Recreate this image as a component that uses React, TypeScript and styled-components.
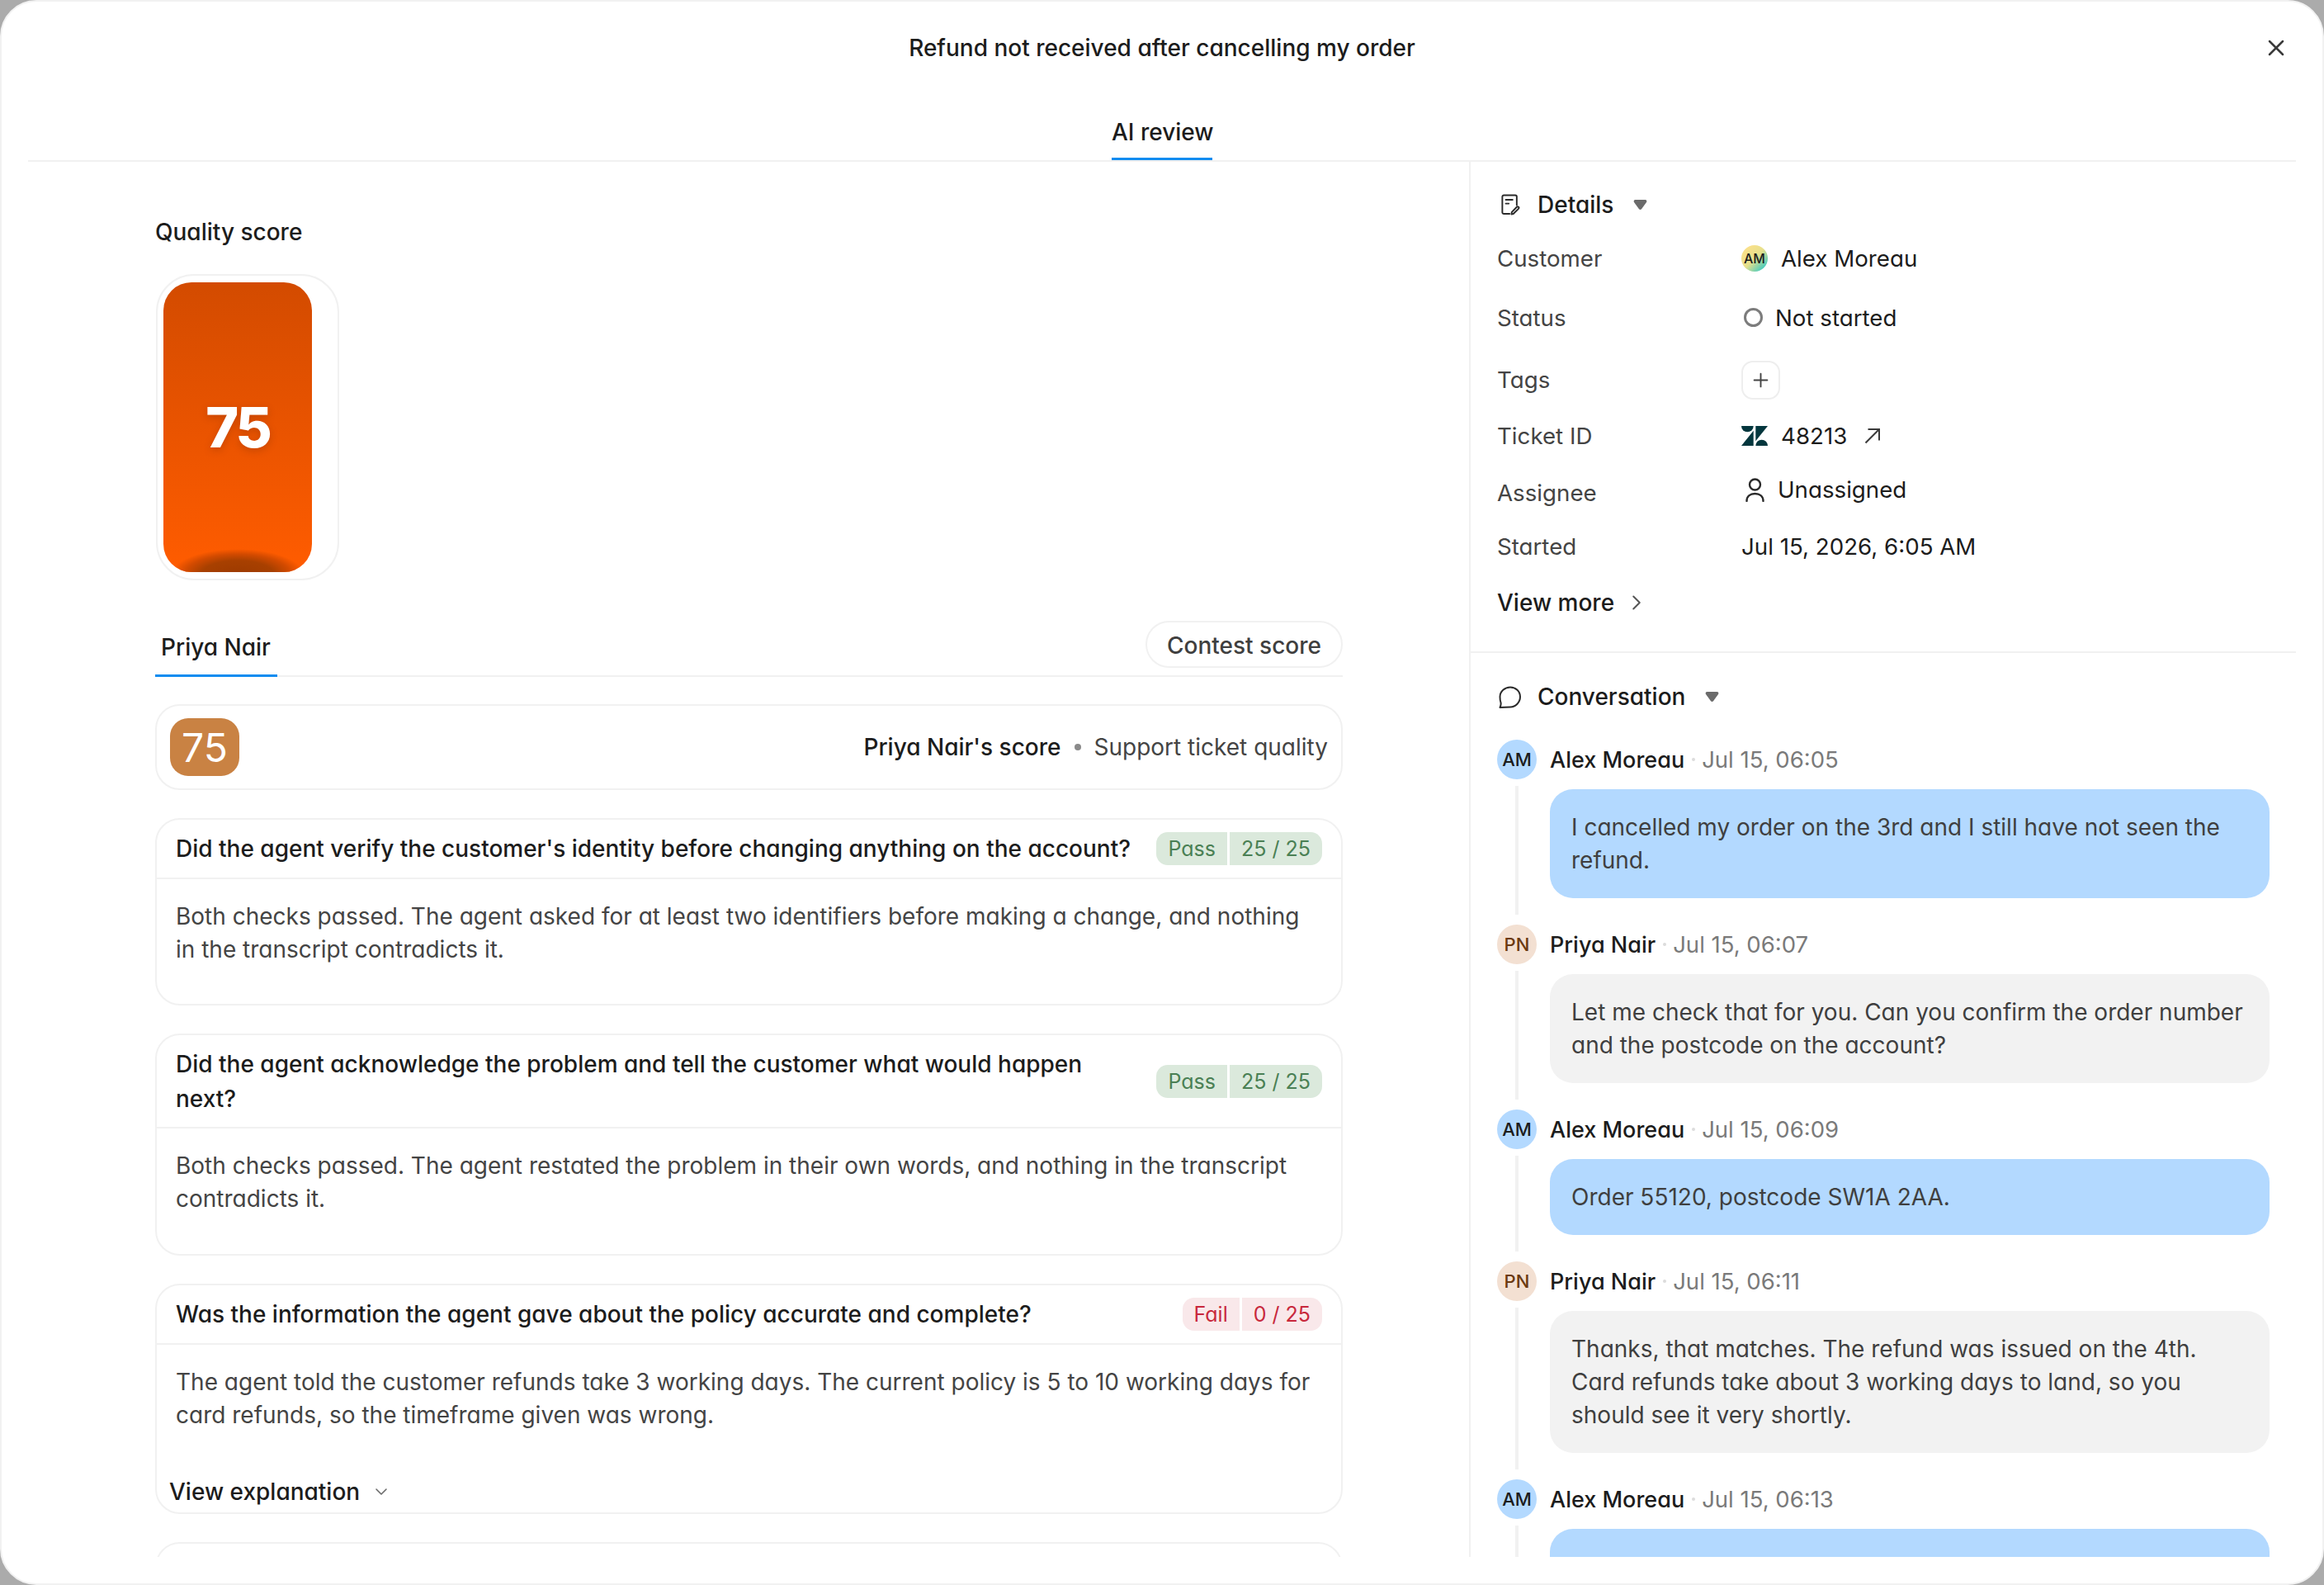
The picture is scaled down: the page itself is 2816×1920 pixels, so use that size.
import styled, { createGlobalStyle } from "styled-components";
import { ChevronDown, ChevronRight, Plus, X } from "lucide-react";

const GlobalStyle = createGlobalStyle`
  html, body {
    margin: 0;
    padding: 0;
    background: #ababab;
    font-family: "Inter", "Noto Sans", sans-serif;
    font-feature-settings: "cv11" 1;
    color: #1c1c1c;
  }
  * { box-sizing: border-box; }
`;

const Modal = styled.div`
  width: 2816px;
  height: 1920px;
  background: #fff;
  border: 2px solid #f1f1f1;
  border-radius: 44px;
  display: flex;
  flex-direction: column;
  overflow: hidden;
`;

const Header = styled.header`
  height: 194px;
  margin: 0 32px;
  border-bottom: 2px solid #f1f1f1;
  flex: none;
  position: relative;
  display: flex;
  flex-direction: column;
  align-items: center;
`;

const Title = styled.h1`
  margin: 0;
  padding-top: 36px;
  font-size: 28px;
  line-height: 40px;
  font-weight: 450;
`;

const CloseButton = styled.button`
  position: absolute;
  right: 7px;
  top: 39px;
  width: 34px;
  height: 34px;
  padding: 0;
  border: 0;
  background: none;
  color: #3a3a3a;
  display: flex;
  align-items: center;
  justify-content: center;
`;

const ReviewTab = styled.div`
  margin-top: 62px;
  height: 54px;
  width: 122px;
  text-align: center;
  white-space: nowrap;
  font-size: 28px;
  line-height: 40px;
  font-weight: 450;
  border-bottom: 3px solid #0f8cf0;
`;

const Body = styled.div`
  height: 1690px;
  margin: 0 32px;
  display: flex;
  overflow: hidden;
  flex: none;
`;

const LeftPane = styled.main`
  width: 1746px;
  flex: none;
  padding: 65px 153px 0 154px;
  overflow: hidden;
`;

const SectionLabel = styled.div`
  font-size: 28px;
  line-height: 40px;
  font-weight: 450;
`;

const ScoreTile = styled.div`
  margin: 31px 0 0 1px;
  width: 222px;
  height: 371px;
  border: 2px solid #f1f1f1;
  border-radius: 46px;
  padding: 8px 31px 8px 7px;
`;

const ScoreFill = styled.div`
  position: relative;
  height: 351px;
  border-radius: 34px;
  overflow: hidden;
  background: linear-gradient(180deg, #d34b00 0%, #ff5c00 100%);
  display: flex;
  align-items: center;
  justify-content: center;
  padding-bottom: 2px;
  color: #fff;
  font-size: 68px;
  font-weight: 800;
  letter-spacing: -3px;
  text-shadow: 0 3px 10px rgba(90, 30, 0, 0.25);
  &::after {
    content: "";
    position: absolute;
    left: 10px;
    right: 10px;
    bottom: -34px;
    height: 62px;
    border-radius: 50%;
    background: radial-gradient(ellipse closest-side, #9c3a00 0%, #a84000 55%, rgba(200, 70, 0, 0.8) 80%, rgba(255, 92, 0, 0) 100%);
  }
`;

const AgentTabs = styled.div`
  margin-top: 28px;
  height: 89px;
  display: flex;
  align-items: flex-end;
  justify-content: space-between;
  border-bottom: 2px solid #f1f1f1;
`;

const AgentTab = styled.div`
  width: 148px;
  height: 68px;
  margin-bottom: -2px;
  padding: 12px 0 0 7px;
  font-size: 28px;
  line-height: 40px;
  font-weight: 450;
  border-bottom: 3px solid #0f8cf0;
`;

const ContestButton = styled.button`
  height: 57px;
  width: 239px;
  margin-bottom: 9px;
  background: #fff;
  border: 2px solid #f1f1f1;
  border-radius: 29px;
  font: inherit;
  font-size: 28px;
  font-weight: 450;
  color: #3f3f3f;
  padding: 2px 0 0;
`;

const ScoreSummary = styled.div`
  margin-top: 33px;
  height: 104px;
  border: 2px solid #f1f1f1;
  border-radius: 30px;
  padding: 0 16px 0 16px;
  display: flex;
  align-items: center;
  justify-content: space-between;
`;

const ScoreBadge = styled.div`
  width: 84px;
  height: 70px;
  border-radius: 22px;
  background: #c98243;
  color: #fff;
  font-size: 48px;
  display: flex;
  align-items: center;
  justify-content: center;
`;

const SummaryText = styled.div`
  display: flex;
  align-items: center;
  font-size: 28px;
  line-height: 40px;
  color: #444;
  strong {
    font-weight: 450;
    color: #1c1c1c;
  }
  i {
    width: 8px;
    height: 8px;
    border-radius: 50%;
    background: #8a8a8a;
    margin: 0 16px;
  }
`;

const Card = styled.section<{ $height: number }>`
  margin-top: 34px;
  height: ${(p) => p.$height}px;
  border: 2px solid #f1f1f1;
  border-radius: 30px;
  overflow: hidden;
  flex: none;
`;

const CardHeader = styled.div<{ $height: number }>`
  height: ${(p) => p.$height}px;
  padding: 0 23px 0 23px;
  border-bottom: 2px solid #f1f1f1;
  display: flex;
  align-items: center;
  justify-content: space-between;
  gap: 24px;
`;

const Question = styled.div`
  font-size: 28px;
  line-height: 42px;
  font-weight: 450;
  color: #1c1c1c;
  white-space: pre-line;
`;

const Verdict = styled.div`
  display: flex;
  gap: 3px;
  flex: none;
`;

const Chip = styled.span<{ $fail?: boolean; $side: "left" | "right" }>`
  height: 40px;
  padding: 0 14px;
  display: flex;
  align-items: center;
  font-size: 25px;
  background: ${(p) => (p.$fail ? "#f9e8ea" : "#dbe9dc")};
  color: ${(p) => (p.$fail ? "#c8283c" : "#4a8054")};
  border-radius: ${(p) => (p.$side === "left" ? "14px 0 0 14px" : "0 14px 14px 0")};
`;

const Answer = styled.p`
  margin: 0;
  padding: 25px 0 0 23px;
  font-size: 28px;
  line-height: 40px;
  color: #444;
  white-space: pre-line;
`;

const ExplainLink = styled.div`
  margin: 53px 0 0 15px;
  display: flex;
  align-items: center;
  gap: 14px;
  font-size: 28px;
  line-height: 40px;
  font-weight: 450;
  color: #1c1c1c;
  svg { color: #6a6a6a; }
`;

const RightPane = styled.aside`
  width: 1002px;
  flex: none;
  border-left: 2px solid #f1f1f1;
  overflow: hidden;
`;

const DetailsSection = styled.section`
  height: 595px;
  padding: 32px 32px 0 32px;
  border-bottom: 2px solid #f1f1f1;
`;

const SectionHead = styled.div`
  display: flex;
  align-items: center;
  height: 40px;
  font-size: 28px;
  font-weight: 450;
  svg { flex: none; }
`;

const HeadIcon = styled.span<{ $inset: number }>`
  width: 49px;
  display: flex;
  padding-left: ${(p) => p.$inset}px;
`;

const Caret = styled.svg`
  margin-left: 24px;
`;

const DetailGrid = styled.div`
  margin-top: 10px;
  display: grid;
  grid-template-columns: 296px 1fr;
  grid-template-rows: 70px 73px 78px 58px 80px 50px;
  align-items: center;
  font-size: 27.7px;
`;

const DetailLabel = styled.div`
  color: #444;
`;

const DetailValue = styled.div<{ $gap?: number; $lift?: number }>`
  display: flex;
  align-items: center;
  gap: ${(p) => p.$gap ?? 16}px;
  color: #1c1c1c;
  margin-bottom: ${(p) => p.$lift ?? 0}px;
`;

const MiniAvatar = styled.span`
  width: 32px;
  height: 32px;
  border-radius: 50%;
  background: linear-gradient(135deg, #f8e08a 20%, #e6e08c 50%, #22c6c9 95%);
  font-size: 16px;
  font-weight: 500;
  display: flex;
  align-items: center;
  justify-content: center;
`;

const StatusRing = styled.span`
  width: 23px;
  height: 23px;
  margin-left: 3px;
  border-radius: 50%;
  border: 3.5px solid #7c7c7c;
`;

const AddTag = styled.button`
  width: 47px;
  height: 47px;
  padding: 0;
  border: 2px solid #eee;
  border-radius: 14px;
  background: #fff;
  color: #444;
  display: flex;
  align-items: center;
  justify-content: center;
`;

const OpenLink = styled.svg`
  margin-left: 5px;
`;

const PersonGlyph = styled.svg`
  margin-left: 5px;
`;

const ViewMore = styled.div`
  margin-top: 23px;
  height: 40px;
  display: flex;
  align-items: center;
  gap: 12px;
  font-size: 28px;
  font-weight: 450;
  color: #1c1c1c;
  svg { color: #555; }
`;

const ConversationSection = styled.section`
  padding: 33px 32px 0 32px;
`;

const Thread = styled.div`
  margin-top: 32px;
`;

const Message = styled.article`
  display: grid;
  grid-template-columns: 48px 1fr;
  column-gap: 16px;
  padding-bottom: 32px;
  position: relative;
  &::before {
    content: "";
    position: absolute;
    left: 22px;
    top: 56px;
    bottom: 12px;
    width: 4px;
    background: #f1f1f1;
  }
`;

const Avatar = styled.span<{ $who: "customer" | "agent" }>`
  width: 48px;
  height: 48px;
  border-radius: 50%;
  background: ${(p) => (p.$who === "customer" ? "#b3d9ff" : "#f3e0d2")};
  color: ${(p) => (p.$who === "customer" ? "#1c1c1c" : "#6b3a10")};
  font-size: 22px;
  font-weight: 500;
  display: flex;
  align-items: center;
  justify-content: center;
`;

const Meta = styled.div`
  display: flex;
  align-items: center;
  height: 48px;
  font-size: 27px;
  font-weight: 450;
  color: #1c1c1c;
  span {
    font-size: 27.500px;
    font-weight: 400;
    color: #7a7a7a;
  }
  i {
    width: 4px;
    height: 4px;
    border-radius: 50%;
    background: #dcdcdc;
    margin: 0 8px 0 9px;
  }
`;

const Bubble = styled.div<{ $who: "customer" | "agent" }>`
  grid-column: 2;
  margin-top: 12px;
  padding: 26px;
  border-radius: 28px;
  background: ${(p) => (p.$who === "customer" ? "#b3d9ff" : "#f2f2f2")};
  font-size: 28px;
  line-height: 40px;
  color: #3f3f3f;
  min-height: 92px;
  white-space: pre-line;
`;

const questions = [
  {
    height: 227,
    headerHeight: 72,
    text: "Did the agent verify the customer's identity before changing anything on the account?",
    verdict: "Pass",
    points: "25 / 25",
    answer:
      "Both checks passed. The agent asked for at least two identifiers before making a change, and nothing\nin the transcript contradicts it.",
  },
  {
    height: 269,
    headerHeight: 113,
    text: "Did the agent acknowledge the problem and tell the customer what would happen\nnext?",
    verdict: "Pass",
    points: "25 / 25",
    answer:
      "Both checks passed. The agent restated the problem in their own words, and nothing in the transcript\ncontradicts it.",
  },
  {
    height: 279,
    headerHeight: 72,
    text: "Was the information the agent gave about the policy accurate and complete?",
    verdict: "Fail",
    points: "0 / 25",
    answer:
      "The agent told the customer refunds take 3 working days. The current policy is 5 to 10 working days for\ncard refunds, so the timeframe given was wrong.",
    explain: true,
  },
];

const messages: { who: "customer" | "agent"; name: string; initials: string; time: string; text: string }[] = [
  { who: "customer", name: "Alex Moreau", initials: "AM", time: "Jul 15, 06:05", text: "I cancelled my order on the 3rd and I still have not seen the\nrefund." },
  { who: "agent", name: "Priya Nair", initials: "PN", time: "Jul 15, 06:07", text: "Let me check that for you. Can you confirm the order number\nand the postcode on the account?" },
  { who: "customer", name: "Alex Moreau", initials: "AM", time: "Jul 15, 06:09", text: "Order 55120, postcode SW1A 2AA." },
  { who: "agent", name: "Priya Nair", initials: "PN", time: "Jul 15, 06:11", text: "Thanks, that matches. The refund was issued on the 4th.\nCard refunds take about 3 working days to land, so you\nshould see it very shortly." },
  // only the top of this bubble is on screen, its text sits below the fold
  { who: "customer", name: "Alex Moreau", initials: "AM", time: "Jul 15, 06:13", text: "" },
];

const CaretIcon = () => (
  <Caret width="17" height="14" viewBox="0 0 17 14">
    <path d="M2.5 1h12c1.600 0 2.400 1.600 1.500 2.900l-6 8.400c-.8 1-2.200 1-3 0L1 3.900C.1 2.600.9 1 2.500 1z" fill="#6b6b6b" />
  </Caret>
);

const DocIcon = () => (
  <svg width="23" height="26" viewBox="0 0 25 27" fill="none" stroke="#2a2a2a" strokeWidth="2.100" strokeLinecap="round" strokeLinejoin="round">
    <path d="M11 25.500H3.500a2 2 0 0 1-2-2V3a2 2 0 0 1 2-2h15a2 2 0 0 1 2 2v11" />
    <path d="M6 7h9M6 12h4" />
    <path d="M16 25.500l-2.500.5.5-2.800 6.500-6.700a1.600 1.600 0 0 1 2.300 2.300z" />
  </svg>
);

const ChatIcon = () => (
  <svg width="27" height="27" viewBox="0 0 27 27" fill="none" stroke="#2a2a2a" strokeWidth="2" strokeLinejoin="round">
    <path d="M14 1.500c6.600 0 12 5 12 11.600s-5.400 12.400-12 12.400c-3 0-7 0-12.500.5 1-2 1.500-3.500 1-6C1.600 17.700 1.500 15 1.500 13 1.500 6.500 7.500 1.500 14 1.500z" />
  </svg>
);

const ZendeskIcon = () => (
  <svg width="32" height="24" viewBox="0 0 32 24" fill="#03363d">
    <path d="M14.700 5.800V24H0z" />
    <path d="M14.700 0a7.350 7.350 0 0 1-14.700 0z" />
    <path d="M17.300 24a7.350 7.350 0 0 1 14.700 0z" />
    <path d="M17.300 18.200V0H32z" />
  </svg>
);

const OpenLinkIcon = () => (
  <OpenLink width="20" height="20" viewBox="0 0 20 20" fill="none" stroke="#3a3a3a" strokeWidth="2">
    <path d="M1.500 18.500L18 2M4.500 2H18v13.500" />
  </OpenLink>
);

const PersonIcon = () => (
  <PersonGlyph width="23" height="29" viewBox="0 0 23 29" fill="none" stroke="#2a2a2a" strokeWidth="2.400" strokeLinecap="round">
    <circle cx="11.500" cy="8" r="6.500" />
    <path d="M1.500 28c0-5.500 4-9 10-9s10 3.500 10 9" />
  </PersonGlyph>
);

export default function App() {
  return (
    <>
      <GlobalStyle />
      <Modal>
        <Header>
          <Title>Refund not received after cancelling my order</Title>
          <CloseButton aria-label="Close">
            <X size={32} strokeWidth={1.9} />
          </CloseButton>
          <ReviewTab>AI review</ReviewTab>
        </Header>
        <Body>
          <LeftPane>
            <SectionLabel>Quality score</SectionLabel>
            <ScoreTile>
              <ScoreFill>75</ScoreFill>
            </ScoreTile>
            <AgentTabs>
              <AgentTab>Priya Nair</AgentTab>
              <ContestButton>Contest score</ContestButton>
            </AgentTabs>
            <ScoreSummary>
              <ScoreBadge>75</ScoreBadge>
              <SummaryText>
                <strong>Priya Nair's score</strong>
                <i />
                Support ticket quality
              </SummaryText>
            </ScoreSummary>
            {questions.map((q) => (
              <Card key={q.text} $height={q.height}>
                <CardHeader $height={q.headerHeight}>
                  <Question>{q.text}</Question>
                  <Verdict>
                    <Chip $side="left" $fail={q.verdict === "Fail"}>{q.verdict}</Chip>
                    <Chip $side="right" $fail={q.verdict === "Fail"}>{q.points}</Chip>
                  </Verdict>
                </CardHeader>
                <Answer>{q.answer}</Answer>
                {q.explain && (
                  <ExplainLink>
                    View explanation
                    <ChevronDown size={24} strokeWidth={1.6} />
                  </ExplainLink>
                )}
              </Card>
            ))}
            <Card $height={120} />
          </LeftPane>
          <RightPane>
            <DetailsSection>
              <SectionHead>
                <HeadIcon $inset={5}><DocIcon /></HeadIcon>
                Details
                <CaretIcon />
              </SectionHead>
              <DetailGrid>
                <DetailLabel>Customer</DetailLabel>
                <DetailValue>
                  <MiniAvatar>AM</MiniAvatar>
                  Alex Moreau
                </DetailValue>
                <DetailLabel>Status</DetailLabel>
                <DetailValue $gap={15}>
                  <StatusRing />
                  Not started
                </DetailValue>
                <DetailLabel>Tags</DetailLabel>
                <DetailValue>
                  <AddTag aria-label="Add tag"><Plus size={27} strokeWidth={1.7} /></AddTag>
                </DetailValue>
                <DetailLabel>Ticket ID</DetailLabel>
                <DetailValue>
                  <ZendeskIcon />
                  48213
                  <OpenLinkIcon />
                </DetailValue>
                <DetailLabel>Assignee</DetailLabel>
                <DetailValue $gap={16} $lift={8}>
                  <PersonIcon />
                  Unassigned
                </DetailValue>
                <DetailLabel>Started</DetailLabel>
                <DetailValue>Jul 15, 2026, 6:05 AM</DetailValue>
              </DetailGrid>
              <ViewMore>
                View more
                <ChevronRight size={30} strokeWidth={1.6} />
              </ViewMore>
            </DetailsSection>
            <ConversationSection>
              <SectionHead>
                <HeadIcon $inset={2}><ChatIcon /></HeadIcon>
                Conversation
                <CaretIcon />
              </SectionHead>
              <Thread>
                {messages.map((m) => (
                  <Message key={m.time}>
                    <Avatar $who={m.who}>{m.initials}</Avatar>
                    <Meta>
                      {m.name}
                      <i />
                      <span>{m.time}</span>
                    </Meta>
                    <Bubble $who={m.who}>{m.text}</Bubble>
                  </Message>
                ))}
              </Thread>
            </ConversationSection>
          </RightPane>
        </Body>
      </Modal>
    </>
  );
}
